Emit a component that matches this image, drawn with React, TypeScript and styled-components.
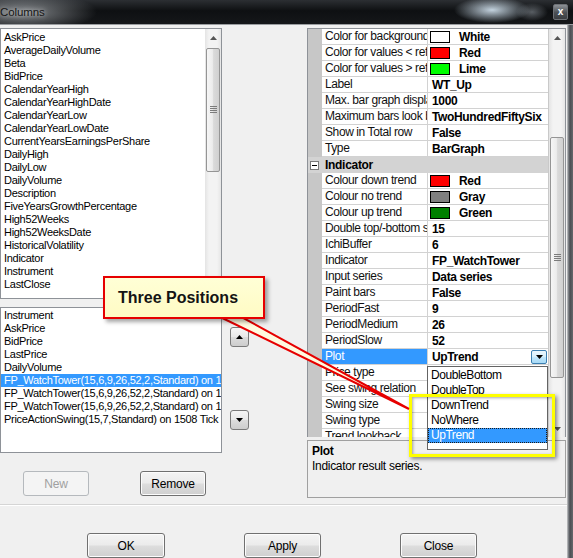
import React from 'react';
import styled, { createGlobalStyle } from 'styled-components';

const GlobalStyle = createGlobalStyle`
  html, body {
    margin: 0;
    padding: 0;
    background: #f0f0f0;
  }
  body {
    font-family: "Liberation Sans", Arial, sans-serif;
  }
`;

const Window = styled.div`
  position: relative;
  width: 573px;
  height: 558px;
  overflow: hidden;
  background: #f0f0f0;
  display: flex;
  flex-direction: column;
  font-family: "Liberation Sans", Arial, sans-serif;
  color: #000;
`;

const TitleBar = styled.div`
  height: 25px;
  flex: none;
  box-sizing: border-box;
  display: flex;
  align-items: center;
  border-bottom: 1px solid #9a9da0;
  background:
    radial-gradient(ellipse 38px 13px at 492px 10px, rgba(215, 232, 245, 0.9), rgba(215, 232, 245, 0) 100%),
    radial-gradient(ellipse 16px 9px at 532px 12px, rgba(150, 158, 166, 0.55), rgba(150, 158, 166, 0) 100%),
    radial-gradient(ellipse 75px 20px at 22px 12px, rgba(140, 144, 148, 0.95), rgba(140, 144, 148, 0) 100%),
    linear-gradient(180deg, #2c2f33 0%, #0e1012 45%, #15171a 100%);
`;

const Caption = styled.span`
  font-size: 11.5px;
  color: #151515;
  text-shadow: 0 0 5px rgba(255, 255, 255, 0.75);
  letter-spacing: -0.1px;
`;

const CloseBox = styled.div`
  margin-left: auto;
  margin-right: 5px;
  width: 15px;
  height: 16px;
  box-sizing: border-box;
  border: 1px solid #6d7075;
  border-radius: 2px;
  background: linear-gradient(180deg, #8d9196 0%, #4c5055 55%, #3b3e42 100%);
  color: #fff;
  font-size: 10px;
  font-weight: bold;
  line-height: 13px;
  text-align: center;
`;

const Body = styled.div`
  flex: 1;
  display: flex;
  min-height: 0;
`;

const Main = styled.div`
  width: 567px;
  display: flex;
  flex-direction: column;
`;

const FrameEdge = styled.div`
  flex: 1;
  background: linear-gradient(90deg, #d2d2d2 0px, #8f9296 1px, #4a4d52 3px, #65686c 6px);
`;

const Panels = styled.div`
  height: 479px;
  display: flex;
`;

const LeftCol = styled.div`
  width: 222px;
  display: flex;
  flex-direction: column;
  padding-top: 3px;
  box-sizing: border-box;
`;

const ListBox = styled.div<{ $h: number }>`
  height: ${p => p.$h}px;
  box-sizing: border-box;
  border: 1px solid #8e9298;
  background: #fff;
  display: flex;
  overflow: hidden;
  flex: none;
  & + & {
    margin-top: 8px;
  }
`;

const ListItems = styled.div<{ $pad: number }>`
  flex: 1;
  min-width: 0;
  padding-top: ${p => p.$pad}px;
`;

const ListItem = styled.div<{ $selected?: boolean }>`
  height: 13px;
  line-height: 13px;
  padding-left: 3px;
  font-size: 11px;
  letter-spacing: -0.3px;
  white-space: nowrap;
  overflow: hidden;
  color: ${p => (p.$selected ? '#fff' : '#000')};
  background: ${p => (p.$selected ? '#3399ff' : 'transparent')};
`;

const ScrollBar = styled.div`
  width: 16px;
  flex: none;
  display: flex;
  flex-direction: column;
  background: linear-gradient(90deg, #e4e4e4 0%, #f3f3f3 25%, #f3f3f3 75%, #e6e6e6 100%);
`;

const ArrowCell = styled.div`
  height: 17px;
  flex: none;
  display: flex;
  align-items: center;
  justify-content: center;
`;

const Track = styled.div`
  flex: 1;
  min-height: 0;
  display: flex;
  flex-direction: column;
  align-items: center;
  overflow: hidden;
`;

const Thumb = styled.div<{ $top: number; $h: number }>`
  margin-top: ${p => p.$top}px;
  height: ${p => p.$h}px;
  width: 14px;
  flex: none;
  box-sizing: border-box;
  border: 1px solid #959595;
  border-radius: 2px;
  background: linear-gradient(90deg, #f6f6f6 0%, #ececec 45%, #dadada 55%, #d0d0d0 100%);
  display: flex;
  align-items: center;
  justify-content: center;
`;

const ButtonRow = styled.div<{ $left: number; $gap: number; $top: number }>`
  display: flex;
  padding-left: ${p => p.$left}px;
  gap: ${p => p.$gap}px;
  margin-top: ${p => p.$top}px;
`;

const PushButton = styled.div<{ $w: number; $disabled?: boolean }>`
  width: ${p => p.$w}px;
  height: 25px;
  box-sizing: border-box;
  border: 1px solid ${p => (p.$disabled ? '#b5b9bd' : '#707070')};
  border-radius: 3px;
  background: ${p =>
    p.$disabled
      ? '#f4f4f4'
      : 'linear-gradient(180deg, #f4f4f4 0%, #ebebeb 48%, #dddddd 52%, #cfcfcf 100%)'};
  box-shadow: inset 0 0 0 1px ${p => (p.$disabled ? '#f4f4f4' : '#fcfcfc')};
  color: ${p => (p.$disabled ? '#a0a0a0' : '#000')};
  font-size: 12px;
  letter-spacing: -0.2px;
  display: flex;
  align-items: center;
  justify-content: center;
`;

const MidCol = styled.div`
  width: 85px;
  display: flex;
  flex-direction: column;
  padding-left: 8px;
  box-sizing: border-box;
`;

const ArrowButton = styled.div<{ $top: number }>`
  margin-top: ${p => p.$top}px;
  width: 19px;
  height: 20px;
  box-sizing: border-box;
  border: 1px solid #7a7a7a;
  border-radius: 3px;
  background: linear-gradient(180deg, #f6f6f6 0%, #e9e9e9 48%, #dcdcdc 52%, #cdcdcd 100%);
  display: flex;
  align-items: center;
  justify-content: center;
`;

const RightCol = styled.div`
  width: 259px;
  display: flex;
  flex-direction: column;
  padding-top: 3px;
  box-sizing: border-box;
`;

const Grid = styled.div`
  height: 409px;
  box-sizing: border-box;
  border: 1px solid #8e9298;
  border-bottom: none;
  display: flex;
  background: #fff;
`;

const GridRows = styled.div`
  flex: 1;
  min-width: 0;
  overflow: hidden;
  border-right: 1px solid #c9c9c9;
`;

const PropRow = styled.div`
  display: grid;
  grid-template-columns: 14px 106px 1fr;
  height: 16px;
`;

const Gutter = styled.div`
  background: #c7c7c7;
`;

const NameCell = styled.div<{ $selected?: boolean }>`
  box-sizing: border-box;
  border-bottom: 1px solid #d2d2d2;
  border-right: 1px solid #d2d2d2;
  padding-left: 3px;
  font-size: 12px;
  letter-spacing: -0.4px;
  line-height: 15px;
  white-space: nowrap;
  overflow: hidden;
  color: ${p => (p.$selected ? '#fff' : '#111')};
  background: ${p => (p.$selected ? '#3399ff' : '#fff')};
`;

const ValueCell = styled.div`
  box-sizing: border-box;
  border-bottom: 1px solid #d2d2d2;
  padding-left: 4px;
  display: flex;
  align-items: center;
  font-size: 12px;
  font-weight: bold;
  letter-spacing: -0.35px;
  white-space: nowrap;
  overflow: hidden;
`;

const Swatch = styled.span<{ $color: string }>`
  width: 20px;
  height: 12px;
  box-sizing: border-box;
  border: 1px solid #000;
  background: ${p => p.$color};
  margin-left: -2px;
  margin-right: 9px;
  flex: none;
`;

const DropButton = styled.span`
  margin-left: auto;
  margin-right: 1px;
  width: 16px;
  height: 14px;
  box-sizing: border-box;
  border: 1px solid #3c7fb1;
  border-radius: 2px;
  background: linear-gradient(180deg, #eaf6fd 0%, #d9f0fc 45%, #bee6fd 55%, #a7d9f5 100%);
  display: flex;
  align-items: center;
  justify-content: center;
  flex: none;
`;

const CategoryRow = styled.div`
  height: 16px;
  display: flex;
  align-items: center;
  background: #d3d3d3;
  font-size: 12px;
  font-weight: bold;
  letter-spacing: -0.3px;
`;

const ExpandBox = styled.span`
  width: 9px;
  height: 9px;
  box-sizing: border-box;
  border: 1px solid #7a7a7a;
  background: #fff;
  margin: 0 6px 0 2px;
  display: flex;
  align-items: center;
  justify-content: center;
  &::after {
    content: '';
    width: 5px;
    height: 1px;
    background: #000;
  }
`;

const Description = styled.div`
  margin-top: 3px;
  height: 58px;
  box-sizing: border-box;
  border: 1px solid #a0a0a0;
  padding: 3px 4px;
  font-size: 12px;
  letter-spacing: -0.3px;
`;

const DescTitle = styled.div`
  font-weight: bold;
  line-height: 15px;
`;

const DescText = styled.div`
  line-height: 15px;
`;

const Separator = styled.div`
  height: 2px;
  flex: none;
  border-top: 1px solid #d5d5d5;
  background: #fff;
  box-sizing: border-box;
`;

const BottomBar = styled.div`
  flex: 1;
`;

/* overlays: the open drop-down list and the annotation drawn on the screenshot */

const DropList = styled.div`
  position: absolute;
  left: 427px;
  top: 366px;
  width: 121px;
  height: 84px;
  box-sizing: border-box;
  border: 1px solid #646464;
  background: #fff;
  padding-top: 1px;
`;

const DropItem = styled.div<{ $selected?: boolean }>`
  height: 15px;
  line-height: 15px;
  padding-left: 3px;
  font-size: 12px;
  letter-spacing: -0.45px;
  box-sizing: border-box;
  color: ${p => (p.$selected ? '#fff' : '#000')};
  background: ${p => (p.$selected ? '#3399ff' : 'transparent')};
  outline: ${p => (p.$selected ? '1px dotted #1a1a1a' : 'none')};
  outline-offset: -1px;
`;

const HighlightBox = styled.div`
  position: absolute;
  left: 409px;
  top: 394px;
  width: 146px;
  height: 63px;
  box-sizing: border-box;
  border: 3px solid #ffff00;
  box-shadow: 2px 2px 4px rgba(0, 0, 0, 0.45), inset 1px 1px 3px rgba(0, 0, 0, 0.35);
`;

const Tail = styled.svg`
  position: absolute;
  left: 0;
  top: 0;
  pointer-events: none;
`;

const Callout = styled.div`
  position: absolute;
  left: 103px;
  top: 276px;
  width: 162px;
  height: 43px;
  box-sizing: border-box;
  border: 2px solid #e60000;
  background: linear-gradient(180deg, #ffffd6 0%, #fffbc4 100%);
  box-shadow: 3px 3px 4px rgba(0, 0, 0, 0.35);
  padding-left: 13px;
  display: flex;
  align-items: center;
  font-size: 16px;
  font-weight: bold;
  color: #141414;
`;

const upTri = (c = '#555') => (
  <svg width="7" height="4" viewBox="0 0 7 4">
    <path d="M0 4 L3.5 0 L7 4 Z" fill={c} />
  </svg>
);

const downTri = (c = '#555') => (
  <svg width="7" height="4" viewBox="0 0 7 4">
    <path d="M0 0 L7 0 L3.5 4 Z" fill={c} />
  </svg>
);

const Grip = () => (
  <svg width="7" height="8" viewBox="0 0 7 8">
    {[0, 2, 4, 6].map(y => (
      <rect key={y} x="0" y={y} width="7" height="1" fill="#7c7c7c" />
    ))}
  </svg>
);

const available = [
  'AskPrice', 'AverageDailyVolume', 'Beta', 'BidPrice', 'CalendarYearHigh',
  'CalendarYearHighDate', 'CalendarYearLow', 'CalendarYearLowDate',
  'CurrentYearsEarningsPerShare', 'DailyHigh', 'DailyLow', 'DailyVolume',
  'Description', 'FiveYearsGrowthPercentage', 'High52Weeks', 'High52WeeksDate',
  'HistoricalVolatility', 'Indicator', 'Instrument', 'LastClose',
];

const chosen = [
  'Instrument', 'AskPrice', 'BidPrice', 'LastPrice', 'DailyVolume',
  'FP_WatchTower(15,6,9,26,52,2,Standard) on 1508 Tick',
  'FP_WatchTower(15,6,9,26,52,2,Standard) on 1508 Tick',
  'FP_WatchTower(15,6,9,26,52,2,Standard) on 1508 Tick',
  'PriceActionSwing(15,7,Standard) on 1508 Tick',
];

type Prop = { name: string; value?: string; swatch?: string; category?: boolean; selected?: boolean; drop?: boolean };

const props: Prop[] = [
  { name: 'Color for background', value: 'White', swatch: '#ffffff' },
  { name: 'Color for values < reference', value: 'Red', swatch: '#ff0000' },
  { name: 'Color for values > reference', value: 'Lime', swatch: '#00ff00' },
  { name: 'Label', value: 'WT_Up' },
  { name: 'Max. bar graph display', value: '1000' },
  { name: 'Maximum bars look back', value: 'TwoHundredFiftySix' },
  { name: 'Show in Total row', value: 'False' },
  { name: 'Type', value: 'BarGraph' },
  { name: 'Indicator', category: true },
  { name: 'Colour down trend', value: 'Red', swatch: '#ff0000' },
  { name: 'Colour no trend', value: 'Gray', swatch: '#808080' },
  { name: 'Colour up trend', value: 'Green', swatch: '#008000' },
  { name: 'Double top/-bottom strength', value: '15' },
  { name: 'IchiBuffer', value: '6' },
  { name: 'Indicator', value: 'FP_WatchTower' },
  { name: 'Input series', value: 'Data series' },
  { name: 'Paint bars', value: 'False' },
  { name: 'PeriodFast', value: '9' },
  { name: 'PeriodMedium', value: '26' },
  { name: 'PeriodSlow', value: '52' },
  { name: 'Plot', value: 'UpTrend', selected: true, drop: true },
  { name: 'Price type', value: 'Close' },
  { name: 'See swing relation', value: 'True' },
  { name: 'Swing size', value: '7' },
  { name: 'Swing type', value: 'Standard' },
  { name: 'Trend lookback', value: '2' },
];

const plotChoices = ['DoubleBottom', 'DoubleTop', 'DownTrend', 'NoWhere', 'UpTrend'];

export default function App() {
  return (
    <Window>
      <GlobalStyle />
      <TitleBar>
        <Caption>Columns</Caption>
        <CloseBox>x</CloseBox>
      </TitleBar>
      <Body>
        <Main>
          <Panels>
            <LeftCol>
              <ListBox $h={271}>
                <ListItems $pad={2}>
                  {available.map(a => (
                    <ListItem key={a}>{a}</ListItem>
                  ))}
                </ListItems>
                <ScrollBar>
                  <ArrowCell>{upTri()}</ArrowCell>
                  <Track>
                    <Thumb $top={2} $h={124}>
                      <Grip />
                    </Thumb>
                  </Track>
                  <ArrowCell>{downTri()}</ArrowCell>
                </ScrollBar>
              </ListBox>
              <ListBox $h={146}>
                <ListItems $pad={1}>
                  {chosen.map((c, i) => (
                    <ListItem key={i} $selected={i === 5}>{c}</ListItem>
                  ))}
                </ListItems>
              </ListBox>
              <ButtonRow $left={23} $gap={51} $top={18}>
                <PushButton $w={66} $disabled>New</PushButton>
                <PushButton $w={66}>Remove</PushButton>
              </ButtonRow>
            </LeftCol>

            <MidCol>
              <ArrowButton $top={302}>{upTri('#000')}</ArrowButton>
              <ArrowButton $top={63}>{downTri('#000')}</ArrowButton>
            </MidCol>

            <RightCol>
              <Grid>
                <GridRows>
                  {props.map((p, i) =>
                    p.category ? (
                      <CategoryRow key={i}>
                        <ExpandBox />
                        {p.name}
                      </CategoryRow>
                    ) : (
                      <PropRow key={i}>
                        <Gutter />
                        <NameCell $selected={p.selected}>{p.name}</NameCell>
                        <ValueCell>
                          {p.swatch && <Swatch $color={p.swatch} />}
                          {p.value}
                          {p.drop && <DropButton>{downTri('#000')}</DropButton>}
                        </ValueCell>
                      </PropRow>
                    )
                  )}
                </GridRows>
                <ScrollBar>
                  <ArrowCell>{upTri()}</ArrowCell>
                  <Track>
                    <Thumb $top={91} $h={241}>
                      <Grip />
                    </Thumb>
                  </Track>
                  <ArrowCell>{downTri()}</ArrowCell>
                </ScrollBar>
              </Grid>
              <Description>
                <DescTitle>Plot</DescTitle>
                <DescText>Indicator result series.</DescText>
              </Description>
            </RightCol>
          </Panels>
          <Separator />
          <BottomBar>
            <ButtonRow $left={87} $gap={79} $top={27}>
              <PushButton $w={78}>OK</PushButton>
              <PushButton $w={77}>Apply</PushButton>
              <PushButton $w={77}>Close</PushButton>
            </ButtonRow>
          </BottomBar>
        </Main>
        <FrameEdge />
      </Body>

      <DropList>
        {plotChoices.map(c => (
          <DropItem key={c} $selected={c === 'UpTrend'}>{c}</DropItem>
        ))}
      </DropList>
      <HighlightBox />
      <Tail width="573" height="558" viewBox="0 0 573 558">
        <polygon
          points="214,314 236,314 409,409"
          fill="#fffbe0"
          stroke="#e60000"
          strokeWidth="2"
          strokeLinejoin="miter"
        />
      </Tail>
      <Callout>Three Positions</Callout>
    </Window>
  );
}
